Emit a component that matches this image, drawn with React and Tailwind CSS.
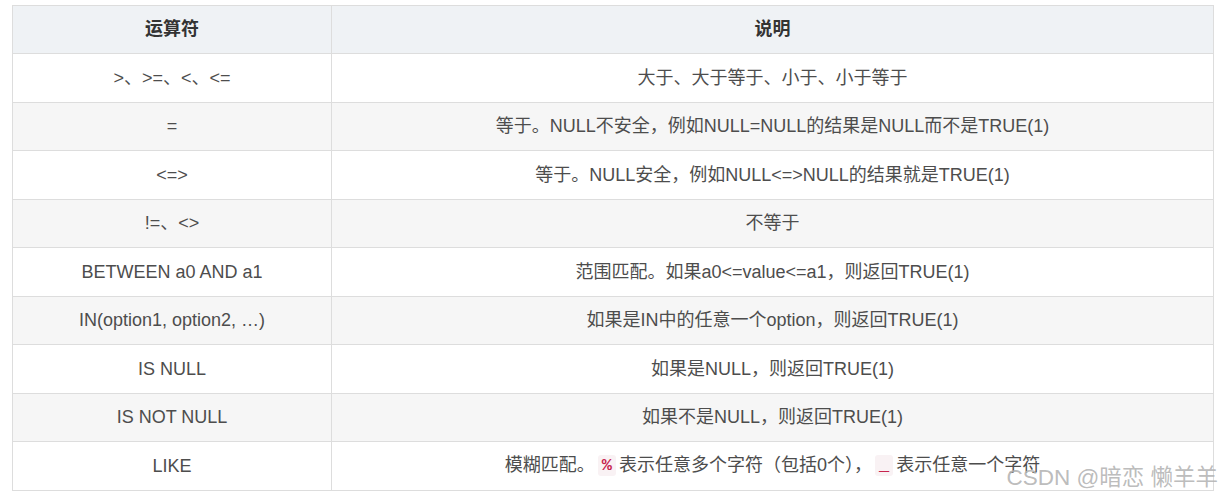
const rows = [
    { op: '>、>=、<、<=', desc: '大于、大于等于、小于、小于等于' },
    { op: '=', desc: '等于。NULL不安全，例如NULL=NULL的结果是NULL而不是TRUE(1)' },
    { op: '<=>', desc: '等于。NULL安全，例如NULL<=>NULL的结果就是TRUE(1)' },
    { op: '!=、<>', desc: '不等于' },
    { op: 'BETWEEN a0 AND a1', desc: '范围匹配。如果a0<=value<=a1，则返回TRUE(1)' },
    { op: 'IN(option1, option2, …)', desc: '如果是IN中的任意一个option，则返回TRUE(1)' },
    { op: 'IS NULL', desc: '如果是NULL，则返回TRUE(1)' },
    { op: 'IS NOT NULL', desc: '如果不是NULL，则返回TRUE(1)' },
    {
        op: 'LIKE',
        desc: (
            <>
                模糊匹配。<Code>%</Code>表示任意多个字符（包括0个），<Code>_</Code>表示任意一个字符
            </>
        ),
    },
];

function Code({ children }) {
    return (
        <code className="mx-[3px] inline-block rounded-[3px] bg-[#f9f2f4] px-[4px] align-[1px] text-[17px] font-bold leading-[21px] text-[#c7254e] [font-family:'Liberation_Mono',monospace]">
            {children}
        </code>
    );
}

export default function App() {
    return (
        <div className="relative h-[497px] w-[1221px] bg-white pl-[12px] pt-[5px] text-[18px] text-[#4d4d4d] [font-family:'Liberation_Sans','Noto_Sans_CJK_SC',sans-serif]">
            <table className="w-[1202px] table-fixed border-collapse">
                <colgroup>
                    <col className="w-[319px]" />
                    <col />
                </colgroup>
                <thead>
                    <tr className="h-[48px] bg-[#eff2f5]">
                        <th className="border border-[#dddddd] font-bold text-[#333]">运算符</th>
                        <th className="border border-[#dddddd] font-bold text-[#333]">说明</th>
                    </tr>
                </thead>
                <tbody>
                    {rows.map((row, index) => (
                        <tr key={index} className={`h-[48.5px] ${index % 2 === 1 ? 'bg-[#f6f6f6]' : 'bg-white'}`}>
                            <td className="border border-[#dddddd] p-0 text-center leading-none">{row.op}</td>
                            <td className="border border-[#dddddd] p-0 text-center leading-none">{row.desc}</td>
                        </tr>
                    ))}
                </tbody>
            </table>
            <div className="absolute right-[3px] top-[463px] text-[22.5px] leading-[30px] text-[#b4b4b4]/90 [font-family:'Liberation_Sans','Noto_Sans_CJK_SC',sans-serif]">
                CSDN @暗恋 懒羊羊
            </div>
        </div>
    );
}
